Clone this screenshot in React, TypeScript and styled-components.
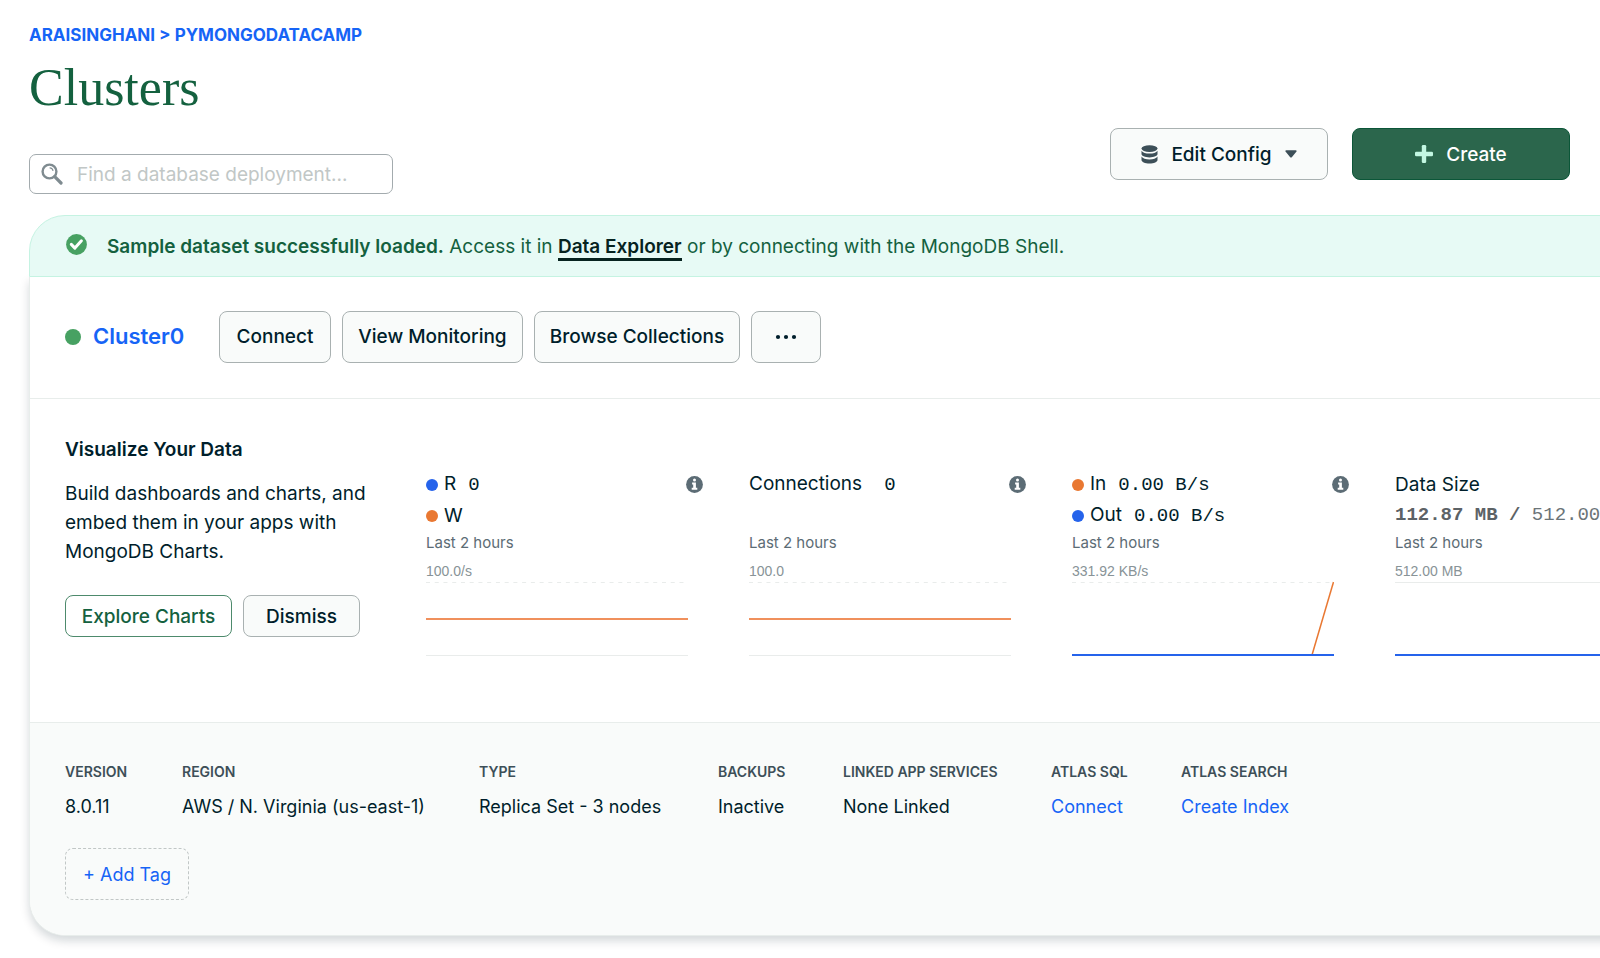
import React from "react";
import styled, { createGlobalStyle } from "styled-components";

const ink = "#001e2b";
const blue = "#1664f6";
const green = "#14613f";
const sans = `Inter, "Open Sans", sans-serif`;
const mono = `"Liberation Mono", monospace`;

const GlobalStyle = createGlobalStyle`
  *, *::before, *::after { box-sizing: border-box; }
  body { margin: 0; background: #fff; color: ${ink}; font: 400 19px/29px ${sans}; overflow-x: hidden; }
  h1, h2, p, dl, dd, dt { margin: 0; }
  button, input { font: inherit; }
  a { color: ${blue}; text-decoration: none; }
`;

const Page = styled.main`
  padding: 24px 0 22px 29px;
  overflow: hidden;
`;

const Header = styled.header`
  display: flex;
  align-items: flex-end;
  justify-content: space-between;
  padding-right: 30px;
  margin-bottom: 21px;
`;

const Breadcrumb = styled.nav`
  color: ${blue};
  font-size: 17px;
  line-height: 22px;
  font-weight: 700;
  text-transform: uppercase;
`;

const Title = styled.h1`
  margin: 12px 0 36px;
  color: ${green};
  font: 400 52px/60px "Liberation Serif", serif;
`;

const SearchBox = styled.label`
  display: flex;
  align-items: center;
  gap: 14px;
  width: 364px;
  height: 40px;
  padding: 0 11px;
  border: 1px solid #a3abae;
  border-radius: 7px;
`;

const SearchInput = styled.input`
  flex: 1;
  min-width: 0;
  padding: 0;
  border: 0;
  outline: 0;
  background: transparent;
  &::placeholder { color: #c1c7c6; opacity: 1; }
`;

const Actions = styled.div`
  display: flex;
  gap: 24px;
  padding-bottom: 14px;
`;

const Button = styled.button<{ $width: number; $tone?: "primary" | "outline"; $small?: boolean }>`
  display: inline-flex;
  align-items: center;
  justify-content: center;
  gap: 13px;
  width: ${(p) => p.$width}px;
  height: ${(p) => (p.$small ? 42 : 52)}px;
  padding: 0;
  border: 1px solid ${(p) => (p.$tone === "primary" ? "#0b5638" : p.$tone === "outline" ? "#4d8a6c" : "#a9b1b1")};
  border-radius: 8px;
  background: ${(p) => (p.$tone === "primary" ? "#2b664c" : p.$tone === "outline" ? "#fff" : "#f9fbfa")};
  color: ${(p) => (p.$tone === "primary" ? "#fff" : p.$tone === "outline" ? green : ink)};
  font-weight: 500;
  white-space: nowrap;
`;

const Card = styled.section`
  margin-right: -40px;
`;

const Banner = styled.div`
  position: relative;
  display: flex;
  align-items: flex-start;
  gap: 20px;
  height: 62px;
  padding: 16px 36px;
  border: 1px solid #c5f3e2;
  border-radius: 36px 36px 0 0;
  background: #e7faf5;
  color: ${green};
  svg { margin-top: 2px; }
  b { font-weight: 600; }
`;

const BannerLink = styled.a`
  border-bottom: 3px solid #06231f;
  color: #06231f;
  font-weight: 600;
`;

const Body = styled.div`
  border: 1px solid #e8edeb;
  border-top: 0;
  border-radius: 0 0 36px 36px;
  background: #fff;
  box-shadow: 0 5px 10px rgba(0, 30, 43, 0.17);
  overflow: hidden;
`;

const ClusterRow = styled.div`
  display: flex;
  align-items: center;
  height: 122px;
  padding: 0 35px 2px;
  border-bottom: 1px solid #e8edeb;
`;

const StatusDot = styled.span`
  width: 16px;
  height: 16px;
  border-radius: 50%;
  background: #47a162;
`;

const ClusterName = styled.a`
  width: 126px;
  margin-left: 12px;
  font-size: 22px;
  font-weight: 600;
`;

const ClusterActions = styled.div`
  display: flex;
  gap: 11px;
`;

const Overview = styled.div`
  display: flex;
  height: 323px;
  padding: 36px 0 0 35px;
`;

const Promo = styled.div`
  flex: 0 0 361px;
`;

const PromoTitle = styled.h2`
  margin-bottom: 15px;
  font-size: 19px;
  font-weight: 600;
  line-height: 29px;
`;

const PromoText = styled.p`
  width: 320px;
`;

const PromoActions = styled.div`
  display: flex;
  gap: 11px;
  margin-top: 29px;
`;

const Metrics = styled.div`
  display: flex;
  gap: 46px;
  padding-top: 34px;
`;

const Metric = styled.article`
  flex: 0 0 277px;
`;

const MetricHead = styled.div`
  display: flex;
  justify-content: space-between;
  height: 63px;
`;

const SeriesLine = styled.div`
  display: flex;
  align-items: center;
  gap: 6px;
  height: 31px;
  white-space: nowrap;
`;

const SeriesDot = styled.span<{ $color: string }>`
  width: 12px;
  height: 12px;
  border-radius: 50%;
  background: ${(p) => p.$color};
`;

const Value = styled.span<{ $wide?: boolean }>`
  margin-left: ${(p) => (p.$wide ? 22 : 12)}px;
  font-family: ${mono};
`;

const SizeLine = styled.div`
  color: #6b7478;
  font-family: ${mono};
  line-height: 31px;
  white-space: pre;
  b { color: #5c6266; }
`;

const Period = styled.div`
  color: #5c6c75;
  font-size: 15px;
  line-height: 22px;
`;

const Scale = styled.div`
  margin-top: 8px;
  color: #889397;
  font: 14px/18px "Liberation Sans", sans-serif;
`;

const Plot = styled.svg`
  display: block;
`;

const Details = styled.footer`
  padding: 35px;
  border-top: 1px solid #e8edeb;
  background: #f9fbfa;
  font-size: 18px;
`;

const Facts = styled.dl`
  display: grid;
  grid-template-columns: 117px 297px 239px 125px 208px 130px auto;
  margin-bottom: 27px;
`;

const FactName = styled.dt`
  color: #3d4f58;
  font-size: 14px;
  font-weight: 600;
  line-height: 28px;
  text-transform: uppercase;
`;

const FactValue = styled.dd`
  padding-top: 6px;
`;

const TagButton = styled.button`
  height: 52px;
  width: 124px;
  padding: 0;
  border: 1px dashed #c1c7c6;
  border-radius: 8px;
  background: transparent;
  color: ${blue};
`;

const SearchIcon = () => (
  <svg width="22" height="22" viewBox="0 0 22 22" fill="none" stroke="#7f8b90">
    <circle cx="8.5" cy="8.5" r="6.9" strokeWidth="2.4" />
    <path d="M13.7 13.7 20 20" strokeWidth="3.2" strokeLinecap="round" />
    <path d="M8.6 4.9c2 0 3.2 1.200 3.400 3.100" strokeWidth="1.100" />
  </svg>
);

const DatabaseIcon = () => (
  <svg width="17" height="19" viewBox="0 0 17 19" fill="#3d4f58">
    <ellipse cx="8.500" cy="3.600" rx="8" ry="3.400" />
    <path d="M.5 5.800c1.200 2 4.300 2.800 8 2.800s6.800-.8 8-2.800v3.300c0 1.900-3.500 3.300-8 3.300S.5 11 .5 9.100z" />
    <path d="M.5 11.600c1.200 2 4.300 2.800 8 2.800s6.800-.8 8-2.800v3.500c0 1.900-3.500 3.500-8 3.500s-8-1.600-8-3.500z" />
  </svg>
);

const CaretIcon = () => (
  <svg width="12" height="8" viewBox="0 0 12 8" fill="#3d4f58">
    <path d="M1.200.3h9.600c.8 0 1.100.8.7 1.300L6.800 7.200c-.4.500-1.200.5-1.600 0L.5 1.600C.1 1.100.4.3 1.200.3z" />
  </svg>
);

const PlusIcon = () => (
  <svg width="18" height="18" viewBox="0 0 18 18" fill="#c3f7e2">
    <rect x="6.800" y="0" width="4.400" height="18" rx="1.300" />
    <rect x="0" y="6.800" width="18" height="4.400" rx="1.300" />
  </svg>
);

const CheckIcon = () => (
  <svg width="21" height="21" viewBox="0 0 21 21">
    <circle cx="10.500" cy="10.500" r="10.400" fill="#47a162" />
    <path d="m5.300 10.400 3.600 3.700 6.500-7.300" fill="none" stroke="#fff" strokeWidth="3" strokeLinecap="round" strokeLinejoin="round" />
  </svg>
);

const DotsIcon = () => (
  <svg width="22" height="6" viewBox="0 0 22 6" fill={ink}>
    <circle cx="3" cy="3" r="2.100" />
    <circle cx="11" cy="3" r="2.100" />
    <circle cx="19" cy="3" r="2.100" />
  </svg>
);

const InfoSvg = styled.svg`
  flex: none;
  margin-top: 7px;
`;

const InfoIcon = () => (
  <InfoSvg width="17" height="17" viewBox="0 0 17 17" role="img" aria-label="More information">
    <circle cx="8.500" cy="8.500" r="8.400" fill="#5c6c75" />
    <circle cx="8.500" cy="3.900" r="1.500" fill="#fff" />
    <path d="M6.100 6.600h3.800v5.200h1.400v1.900H5.700v-1.900h1.500V8.500H6.100z" fill="#fff" />
  </InfoSvg>
);

const orange = "#e97832";
const royal = "#2563eb";

type PlotKind = "flat" | "network" | "storage";

const MetricPlot = ({ kind }: { kind: PlotKind }) => (
  <Plot width="262" height="76" viewBox="0 0 262 76">
    <path d="M0 2.500H262" stroke="#e9eceb" strokeDasharray={kind === "storage" ? undefined : "4 4.740"} />
    {kind === "flat" && (
      <>
        <path d="M0 75.500H262" stroke="#e9eceb" />
        <path d="M0 39H262" stroke="#f0905c" strokeWidth="2" />
      </>
    )}
    {kind === "network" && <path d="M240 75 261.500 2" fill="none" stroke={orange} strokeWidth="1.500" />}
    {kind !== "flat" && <path d="M0 75H262" stroke={royal} strokeWidth="2" />}
  </Plot>
);

type Series = { label: string; color?: string; value?: string };

const MetricCard = ({ series, kind, scale, children }: { series: Series[]; kind: PlotKind; scale: string; children?: React.ReactNode }) => (
  <Metric>
    <MetricHead>
      <div>
        {series.map((s) => (
          <SeriesLine key={s.label}>
            {s.color && <SeriesDot $color={s.color} />}
            <span>
              {s.label}
              {s.value && <Value $wide={!s.color}>{s.value}</Value>}
            </span>
          </SeriesLine>
        ))}
        {children}
      </div>
      <InfoIcon />
    </MetricHead>
    <Period>Last 2 hours</Period>
    <Scale>{scale}</Scale>
    <MetricPlot kind={kind} />
  </Metric>
);

const facts: { name: string; value: string; link?: boolean }[] = [
  { name: "Version", value: "8.0.11" },
  { name: "Region", value: "AWS / N. Virginia (us-east-1)" },
  { name: "Type", value: "Replica Set - 3 nodes" },
  { name: "Backups", value: "Inactive" },
  { name: "Linked App Services", value: "None Linked" },
  { name: "Atlas SQL", value: "Connect", link: true },
  { name: "Atlas Search", value: "Create Index", link: true },
];

export default function App() {
  return (
    <>
      <GlobalStyle />
      <Page>
        <Header>
          <div>
            <Breadcrumb aria-label="Breadcrumb">
              <a href="#organization">Araisinghani</a> &gt; <a href="#project">Pymongodatacamp</a>
            </Breadcrumb>
            <Title>Clusters</Title>
            <SearchBox>
              <SearchIcon />
              <SearchInput type="text" aria-label="Find a database deployment" placeholder="Find a database deployment..." />
            </SearchBox>
          </div>
          <Actions>
            <Button type="button" $width={218}>
              <DatabaseIcon />
              Edit Config
              <CaretIcon />
            </Button>
            <Button type="button" $width={218} $tone="primary">
              <PlusIcon />
              Create
            </Button>
          </Actions>
        </Header>

        <Card>
          <Banner role="status">
            <CheckIcon />
            <p>
              <b>Sample dataset successfully loaded.</b> Access it in <BannerLink href="#explorer">Data Explorer</BannerLink> or by
              connecting with the MongoDB Shell.
            </p>
          </Banner>
          <Body>
            <ClusterRow>
              <StatusDot />
              <ClusterName href="#cluster0">Cluster0</ClusterName>
              <ClusterActions>
                <Button type="button" $width={112}>Connect</Button>
                <Button type="button" $width={181}>View Monitoring</Button>
                <Button type="button" $width={206}>Browse Collections</Button>
                <Button type="button" $width={70} aria-label="More actions"><DotsIcon /></Button>
              </ClusterActions>
            </ClusterRow>
            <Overview>
              <Promo>
                <PromoTitle>Visualize Your Data</PromoTitle>
                <PromoText>Build dashboards and charts, and embed them in your apps with MongoDB Charts.</PromoText>
                <PromoActions>
                  <Button type="button" $width={167} $tone="outline" $small>Explore Charts</Button>
                  <Button type="button" $width={117} $small>Dismiss</Button>
                </PromoActions>
              </Promo>
              <Metrics>
                <MetricCard kind="flat" scale="100.0/s" series={[{ label: "R", color: royal, value: "0" }, { label: "W", color: orange }]} />
                <MetricCard kind="flat" scale="100.0" series={[{ label: "Connections", value: "0" }]} />
                <MetricCard
                  kind="network"
                  scale="331.92 KB/s"
                  series={[{ label: "In", color: orange, value: "0.00 B/s" }, { label: "Out", color: royal, value: "0.00 B/s" }]}
                />
                <MetricCard kind="storage" scale="512.00 MB" series={[{ label: "Data Size" }]}>
                  <SizeLine><b>112.87 MB / </b>512.00</SizeLine>
                </MetricCard>
              </Metrics>
            </Overview>
            <Details>
              <Facts>
                {facts.map((f) => (
                  <div key={f.name}>
                    <FactName>{f.name}</FactName>
                    <FactValue>{f.link ? <a href="#atlas">{f.value}</a> : f.value}</FactValue>
                  </div>
                ))}
              </Facts>
              <TagButton type="button">+ Add Tag</TagButton>
            </Details>
          </Body>
        </Card>
      </Page>
    </>
  );
}
